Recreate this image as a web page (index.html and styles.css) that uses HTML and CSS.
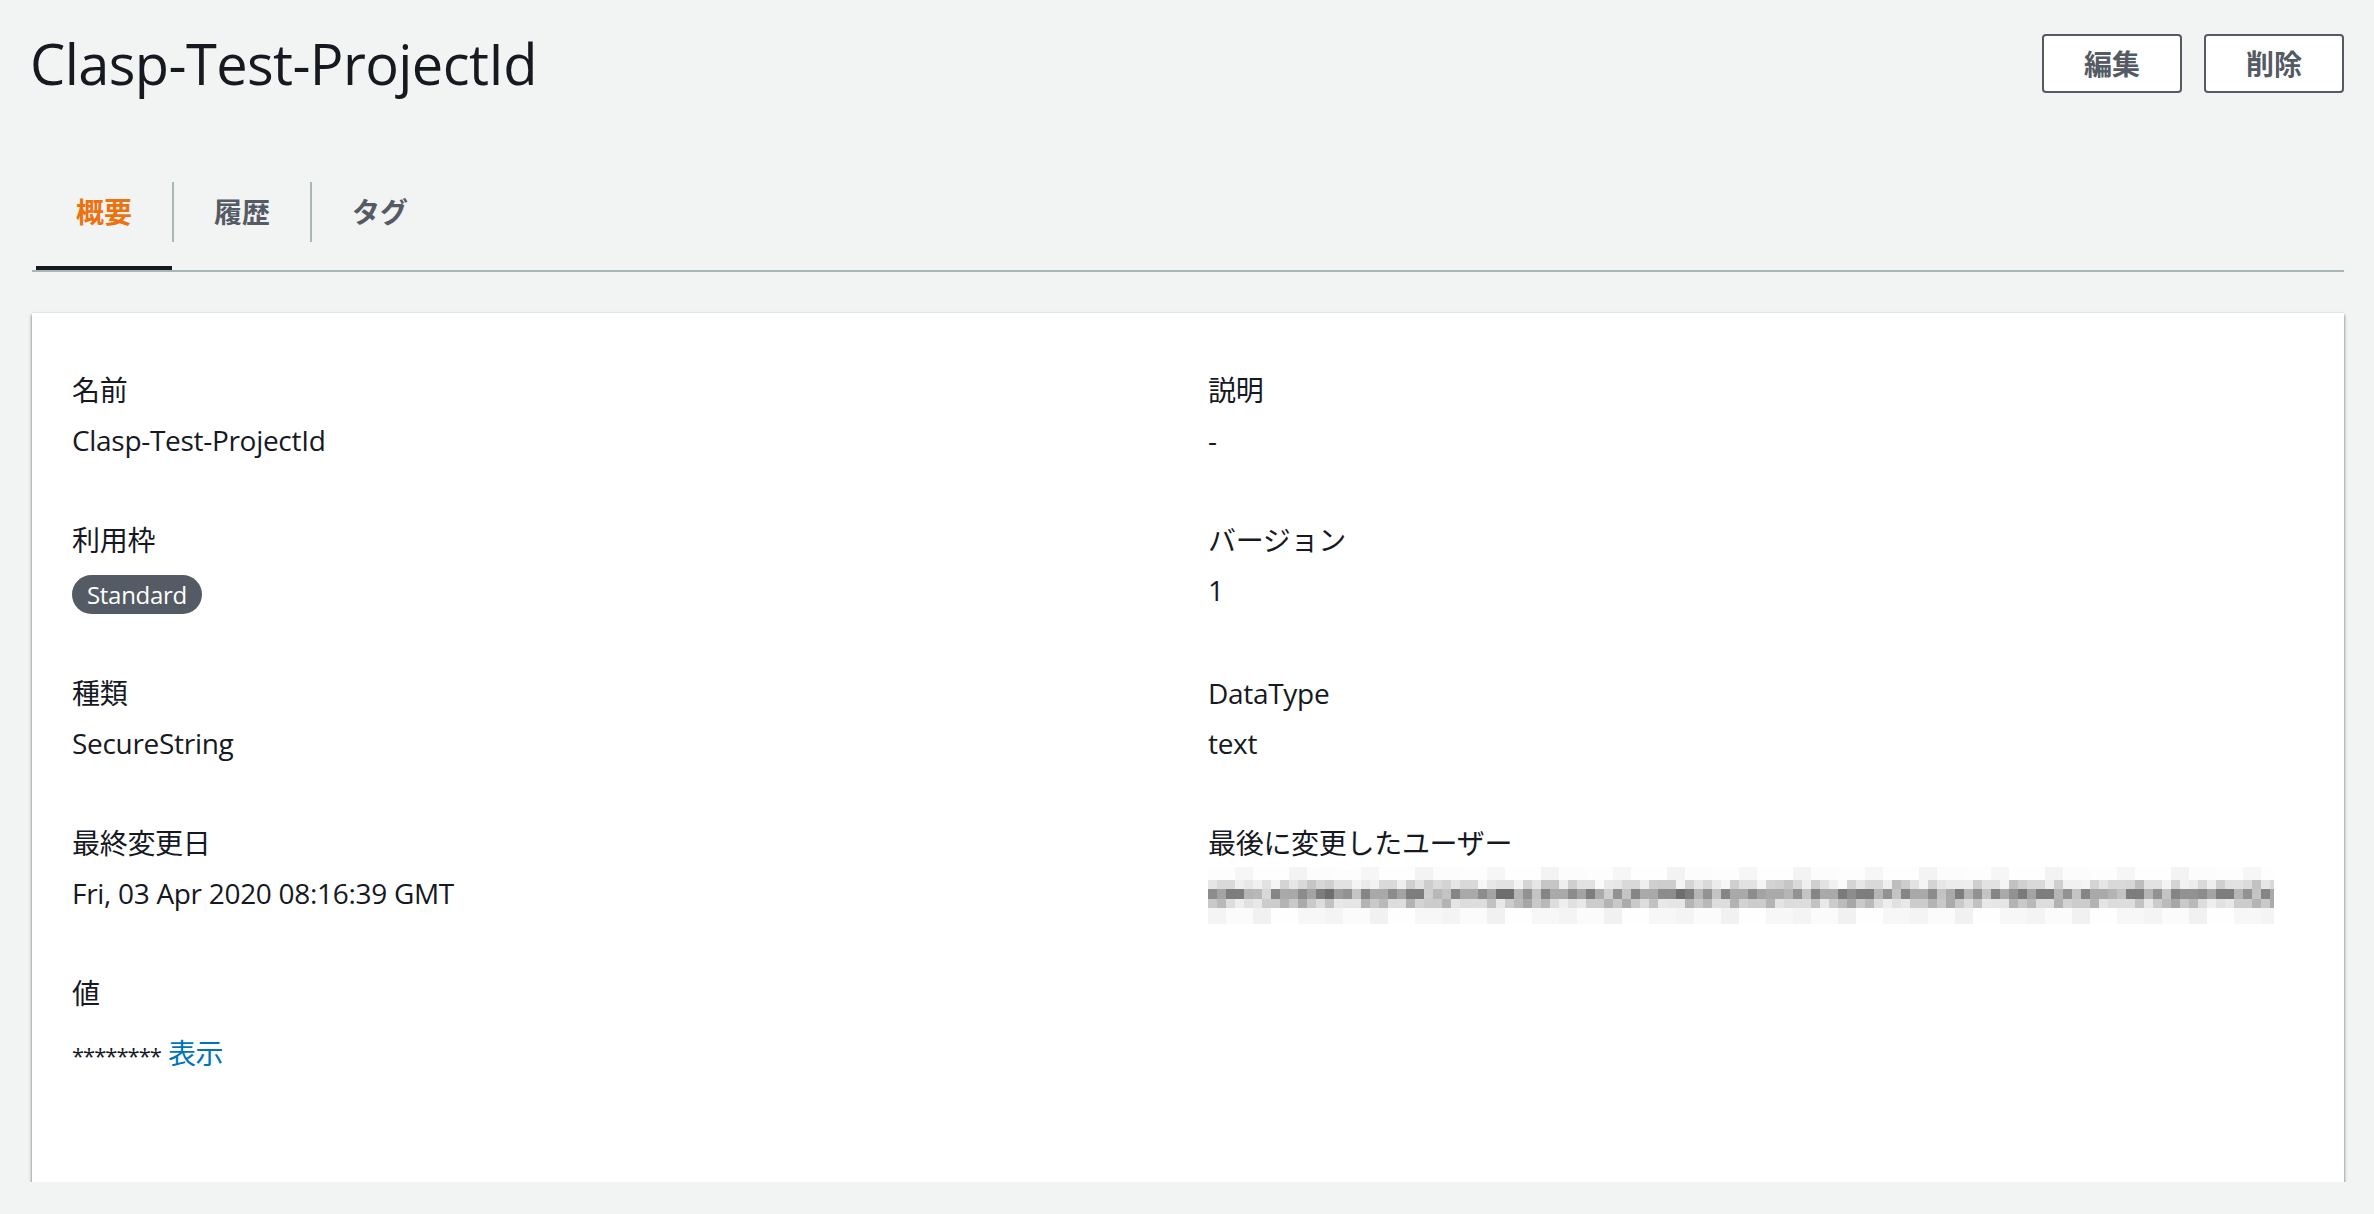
FILE: index.html
```html
<!DOCTYPE html>
<html lang="ja">

<head>
    <meta charset="UTF-8">
    <meta name="viewport" content="width=device-width, initial-scale=1.0">
    <title>Clasp-Test-ProjectId</title>
    <link rel="stylesheet" href="styles.css">
</head>

<body>
    <div class="page">
        <header class="page-header">
            <h1 class="page-title">Clasp-Test-ProjectId</h1>
            <div class="actions">
                <button class="btn">編集</button>
                <button class="btn">削除</button>
            </div>
        </header>

        <nav class="tabs">
            <a href="#" class="tab active"><span>概要</span></a>
            <a href="#" class="tab"><span>履歴</span></a>
            <a href="#" class="tab"><span>タグ</span></a>
        </nav>

        <section class="card">
            <div class="kv-grid">
                <div class="kv">
                    <div class="kv-label">名前</div>
                    <div class="kv-value">Clasp-Test-ProjectId</div>
                </div>
                <div class="kv">
                    <div class="kv-label">説明</div>
                    <div class="kv-value">-</div>
                </div>

                <div class="kv">
                    <div class="kv-label">利用枠</div>
                    <div class="kv-value badge-row"><span class="badge">Standard</span></div>
                </div>
                <div class="kv">
                    <div class="kv-label">バージョン</div>
                    <div class="kv-value">1</div>
                </div>

                <div class="kv">
                    <div class="kv-label">種類</div>
                    <div class="kv-value">SecureString</div>
                </div>
                <div class="kv">
                    <div class="kv-label">DataType</div>
                    <div class="kv-value">text</div>
                </div>

                <div class="kv">
                    <div class="kv-label">最終変更日</div>
                    <div class="kv-value">Fri, 03 Apr 2020 08:16:39 GMT</div>
                </div>
                <div class="kv">
                    <div class="kv-label">最後に変更したユーザー</div>
                    <!-- user ARN is blurred out in the original -->
                    <div class="kv-value blurred">
                        <div class="blur-row faint"></div>
                        <div class="blur-row row-a"></div>
                        <div class="blur-row row-b"></div>
                        <div class="blur-row row-c"></div>
                        <div class="blur-row faint-low"></div>
                    </div>
                </div>

                <div class="kv">
                    <div class="kv-label">値</div>
                    <div class="kv-value secret"><span class="mask">********</span> <a href="#" class="link">表示</a></div>
                </div>
            </div>
        </section>
    </div>
</body>

</html>
```

FILE: styles.css
```css
body {
    margin: 0;
    padding: 0;
    background-color: #f2f3f3;
    color: #16191f;
    font-family: "Open Sans", "Noto Sans CJK JP", sans-serif;
    font-size: 28px;
    line-height: 44px;
    letter-spacing: -0.3px;
}

.page {
    padding: 0 30px 0 32px;
}

/* header */

.page-header {
    display: flex;
    justify-content: space-between;
    align-items: center;
    padding-top: 23px;
    height: 80px;
}

.page-title {
    margin: 0 0 0 -2px;
    font-size: 56px;
    line-height: 80px;
    font-weight: 400;
    letter-spacing: -0.6px;
}

.actions {
    display: flex;
    gap: 22px;
}

.btn {
    height: 59px;
    padding: 0 40px;
    background-color: #fff;
    border: 2px solid #545b64;
    border-radius: 4px;
    color: #545b64;
    font-family: "Open Sans", "Noto Sans CJK JP", sans-serif;
    font-size: 28px;
    font-weight: 700;
    letter-spacing: 0;
}

/* tabs */

.tabs {
    display: flex;
    margin-top: 79px;
    padding-left: 4px;
    border-bottom: 2px solid #aab7b8;
}

.tab {
    padding-bottom: 28px;
    text-decoration: none;
    color: #545b64;
    font-weight: 700;
    letter-spacing: 0;
}

.tab span {
    display: block;
    padding: 0 40px;
    line-height: 60px;
}

.tab + .tab span {
    border-left: 2px solid #aab7b8;
}

.tab.active {
    padding-bottom: 24px;
    border-bottom: 4px solid #16191f;
    color: #ec7211;
}

/* card */

.card {
    margin-top: 41px;
    padding: 55px 40px 105px;
    background-color: #fff;
    box-shadow: 0 2px 2px 0 rgba(0, 28, 36, 0.45),
        2px 2px 2px 0 rgba(0, 28, 36, 0.12),
        -2px 2px 2px 0 rgba(0, 28, 36, 0.12),
        0 -1px 1px 0 rgba(0, 28, 36, 0.06);
}

.kv-grid {
    display: grid;
    grid-template-columns: 1fr 1fr;
    column-gap: 40px;
    row-gap: 56px;
}

.kv-label {
    margin-bottom: 6px;
}

.kv-value {
    min-height: 44px;
}

.badge-row {
    padding-top: 3px;
    min-height: 41px;
}

.badge {
    display: inline-block;
    height: 39px;
    padding: 0 15px;
    border-radius: 20px;
    background-color: #545b64;
    color: #fff;
    font-size: 24px;
    font-weight: 500;
    line-height: 39px;
}

.secret {
    margin-top: 16px;
}

.mask {
    font-size: 22px;
    letter-spacing: -1px;
}

.link {
    color: #0073bb;
    text-decoration: none;
}

/* pixelated user name */

.blurred {
    width: 1066px;
    margin-top: -4px;
    margin-bottom: -9px;
    min-height: 0;
}

.blur-row {
    height: 9px;
}

.blur-row.faint {
    height: 13px;
    background: repeating-linear-gradient(90deg,
            #fdfdfd 0 27px, #f6f6f6 27px 45px, #fefefe 45px 81px, #f3f3f3 81px 99px, #fcfcfc 99px 126px);
}

.blur-row.row-a {
    background:
        repeating-linear-gradient(90deg,
            rgba(255, 255, 255, 0) 0 36px, rgba(255, 255, 255, 0.5) 36px 54px, rgba(0, 0, 0, 0) 54px 99px, rgba(120, 120, 120, 0.2) 99px 117px),
        repeating-linear-gradient(90deg,
            #e6e6e6 0 9px, #d9d9d9 9px 27px, #eeeeee 27px 36px, #cfcfcf 36px 45px, #e2e2e2 45px 63px, #f4f4f4 63px 72px, #d4d4d4 72px 81px);
}

.blur-row.row-b {
    height: 10px;
    background:
        repeating-linear-gradient(90deg,
            rgba(0, 0, 0, 0) 0 45px, rgba(255, 255, 255, 0.35) 45px 63px, rgba(0, 0, 0, 0) 63px 117px, rgba(40, 40, 40, 0.18) 117px 135px, rgba(0, 0, 0, 0) 135px 171px),
        repeating-linear-gradient(90deg,
            #8c8c8c 0 9px, #a3a3a3 9px 18px, #7d7d7d 18px 36px, #b5b5b5 36px 45px, #929292 45px 54px, #c4c4c4 54px 63px, #858585 63px 72px, #a9a9a9 72px 90px);
}

.blur-row.row-c {
    background:
        repeating-linear-gradient(90deg,
            rgba(0, 0, 0, 0) 0 27px, rgba(255, 255, 255, 0.5) 27px 45px, rgba(0, 0, 0, 0) 45px 90px, rgba(90, 90, 90, 0.15) 90px 108px),
        repeating-linear-gradient(90deg,
            #c9c9c9 0 9px, #b9b9b9 9px 18px, #dddddd 18px 36px, #c2c2c2 36px 45px, #e8e8e8 45px 54px, #cccccc 54px 72px, #b4b4b4 72px 81px);
}

.blur-row.faint-low {
    height: 16px;
    background: repeating-linear-gradient(90deg,
            #f4f4f4 0 18px, #fbfbfb 18px 45px, #f1f1f1 45px 63px, #fefefe 63px 90px, #f7f7f7 90px 117px);
}
```
